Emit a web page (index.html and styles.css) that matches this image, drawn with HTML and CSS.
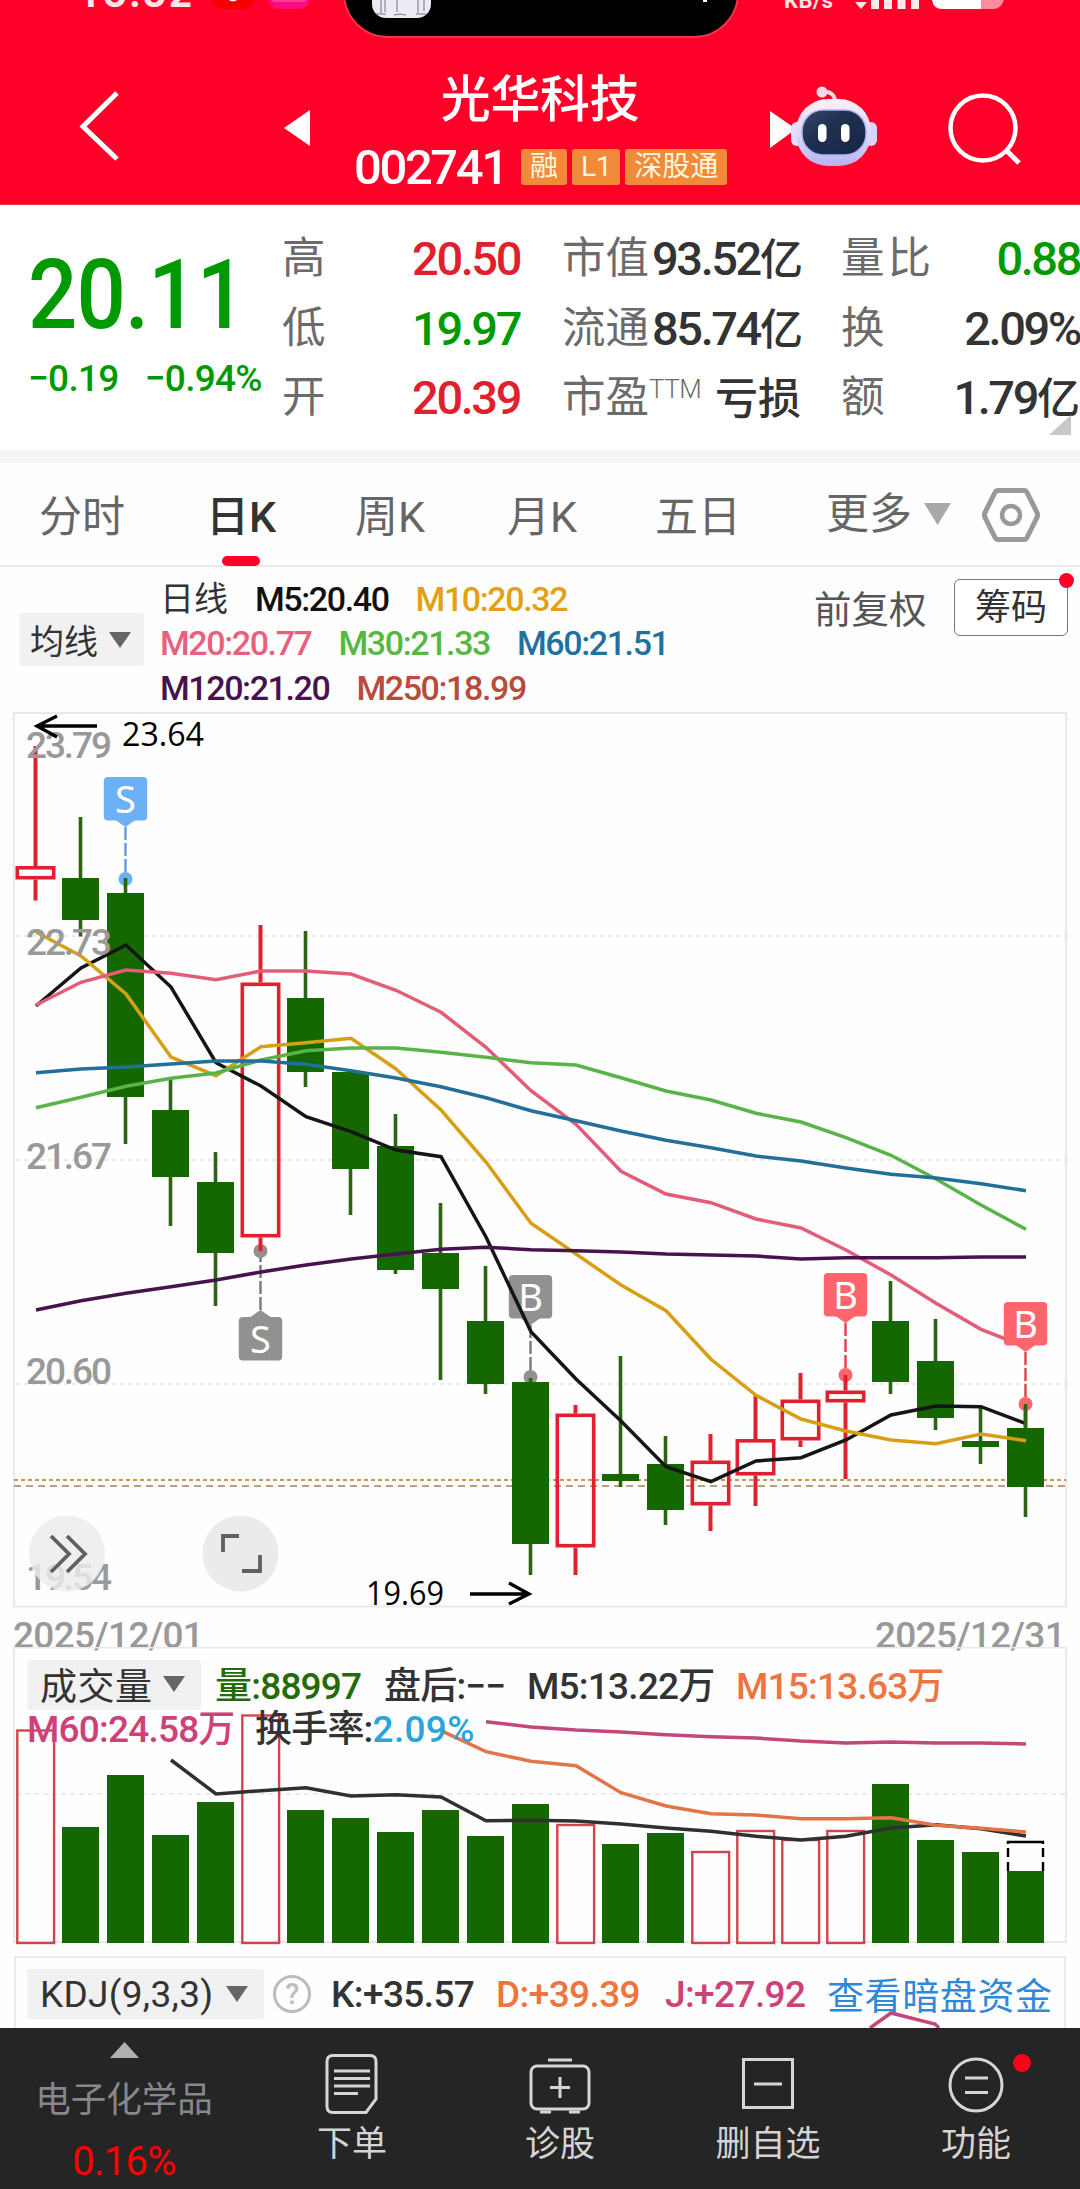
FILE: index.html
```html
<!DOCTYPE html>
<html lang="zh-CN">
<head>
<meta charset="utf-8">
<title>光华科技 002741</title>
<link rel="stylesheet" href="styles.css">
</head>
<body>
<header class="header">
  <svg class="status" viewBox="0 0 1080 50">
    <text class="status-time" x="78" y="6.5" textLength="114">13:32</text>
    <rect x="212" y="-33" width="42" height="42" rx="10" fill="#f40000"/>
    <circle cx="233" cy="-5" r="6.5" fill="#fff"/>
    <rect x="268" y="-33" width="42" height="42" rx="10" fill="#ff0b7d"/>
    <rect x="272" y="-3" width="34" height="5" rx="2" fill="#ff3d9b"/>
    <rect x="344" y="-60" width="394" height="97" rx="44" fill="#000" stroke="#f23549" stroke-width="2"/>
    <rect x="372" y="-41" width="59" height="59" rx="14" fill="#eceaf2"/>
    <path d="M381 0v13M385 0v12M397 0v12M418 0v13M424 0v11M376 14h10M394 15q6-2 12 0M416 14h10" fill="none" stroke="#77767f" stroke-width="1"/>
    <rect x="703" y="0" width="4" height="2" fill="#fff"/>
    <text class="status-net" x="784" y="8" textLength="49">KB/s</text>
    <path d="M855 2h12l-6 7z" fill="#ffe9ec"/>
    <path d="M875 -10V9M888 -10V9M901.500 -10V9M915 -10V9" stroke="#ffe9ec" stroke-width="8"/>
    <rect x="932" y="-30" width="72" height="39" rx="11" fill="#ff8c9b"/>
    <path d="M932 -10h49V9h-38q-11 0-11-11z" fill="#fff"/>
  </svg>
  <nav class="title-bar">
    <svg class="back" viewBox="0 0 50 80"><path d="M42 7 8 40.500 42 73" fill="none" stroke="#fff" stroke-width="5"/></svg>
    <svg class="prev" viewBox="0 0 26 38"><path d="M0 19 26 1v36z" fill="#fff"/></svg>
    <div class="stock">
      <h1 class="stock-name">光华科技</h1>
      <div class="stock-meta">
        <span class="code">002741</span>
        <span class="tag tag-a">融</span><span class="tag tag-b">L1</span><span class="tag tag-c">深股通</span>
      </div>
    </div>
    <svg class="robot" viewBox="0 0 110 90">
      <defs>
        <linearGradient id="shell" x1="0" y1="0" x2="0" y2="1"><stop offset="0" stop-color="#fff0f6"/><stop offset=".6" stop-color="#d8d4f8"/><stop offset="1" stop-color="#b9b2ee"/></linearGradient>
        <linearGradient id="visor" x1="0" y1="0" x2="1" y2="1"><stop offset="0" stop-color="#34466a"/><stop offset=".4" stop-color="#20304f"/><stop offset="1" stop-color="#172447"/></linearGradient>
      </defs>
      <path d="M0 27 26 45 0 64z" fill="#fff"/>
      <path d="M52 8q12-2 14 11" fill="none" stroke="#fbdbe6" stroke-width="4"/>
      <circle cx="52" cy="8" r="5.500" fill="#fbdbe6"/>
      <rect x="21" y="38" width="12" height="24" rx="6" fill="#e7ddf8"/>
      <rect x="95" y="38" width="12" height="24" rx="6" fill="#d9d3fa"/>
      <rect x="26" y="15" width="75" height="67" rx="32" fill="url(#shell)"/>
      <rect x="32" y="26" width="64" height="45" rx="21" fill="url(#visor)" stroke="#aeb5f2" stroke-width="1.500"/>
      <rect x="48" y="40" width="8.500" height="18" rx="4.200" fill="#fff"/>
      <rect x="71" y="40" width="8.500" height="18" rx="4.200" fill="#fff"/>
    </svg>
    <svg class="search" viewBox="0 0 80 80"><circle cx="37" cy="38" r="32.500" fill="none" stroke="#fff" stroke-width="4.500"/><path d="M61 61 73 73" stroke="#fff" stroke-width="5"/></svg>
  </nav>
</header>

<section class="quote">
  <div class="price-block">
    <div class="price">20.11</div>
    <div class="changes"><span>−0.19</span><span>−0.94%</span></div>
  </div>
  <dl class="stats stats-a">
    <dt>高</dt><dd class="up">20.50</dd>
    <dt>低</dt><dd class="down">19.97</dd>
    <dt>开</dt><dd class="up">20.39</dd>
  </dl>
  <dl class="stats stats-b">
    <dt>市值</dt><dd>93.52<i>亿</i></dd>
    <dt>流通</dt><dd>85.74<i>亿</i></dd>
    <dt>市盈<sup>TTM</sup></dt><dd><i>亏损</i></dd>
  </dl>
  <dl class="stats stats-c">
    <dt class="wide">量比</dt><dd class="down">0.88</dd>
    <dt>换</dt><dd>2.09%</dd>
    <dt>额</dt><dd>1.79<i>亿</i></dd>
  </dl>
  <svg class="corner" viewBox="0 0 22 20"><path d="M22 0v20H0z" fill="#c8c8c8"/></svg>
</section>

<nav class="tabs">
  <span class="tab t1">分时</span>
  <span class="tab t2 active">日K</span>
  <span class="tab t3">周K</span>
  <span class="tab t4">月K</span>
  <span class="tab t5">五日</span>
  <span class="tab t6">更多<svg class="more-arrow" viewBox="0 0 27 22"><path d="M0 0h27L13.500 22z" fill="#a8a8a8"/></svg></span>
  <svg class="gear" viewBox="0 0 60 58"><path d="M17 4.500h26q2 0 3 2l10 20q1.200 2.500 0 5l-10 20q-1 2-3 2H17q-2 0-3-2L4 31.500q-1.200-2.500 0-5l10-20q1-2 3-2z" fill="none" stroke="#999" stroke-width="5"/><circle cx="30" cy="29" r="9" fill="none" stroke="#999" stroke-width="4.500"/></svg>
</nav>

<section class="legend">
  <button class="picker picker-ma">均线<svg viewBox="0 0 22 16"><path d="M0 0h22L11 16z" fill="#666"/></svg></button>
  <div class="ma-rows">
    <div class="ma-row"><span class="c-dark cn">日线</span><span class="c-m5">M5:20.40</span><span class="c-m10">M10:20.32</span></div>
    <div class="ma-row"><span class="c-m20">M20:20.77</span><span class="c-m30">M30:21.33</span><span class="c-m60">M60:21.51</span></div>
    <div class="ma-row"><span class="c-m120">M120:21.20</span><span class="c-m250">M250:18.99</span></div>
  </div>
  <div class="legend-tools"><span class="adjust">前复权</span><button class="chips">筹码<i class="dot"></i></button></div>
</section>

<svg class="kline" id="kline" viewBox="0 712 1080 896"></svg>
<div class="dates"><span>2025/12/01</span><span>2025/12/31</span></div>

<section class="volume">
  <svg class="volume-chart" id="volume" viewBox="0 1647 1080 298"></svg>
  <div class="volume-legend">
    <div class="v-row">
      <button class="picker picker-vol">成交量<svg viewBox="0 0 22 16"><path d="M0 0h22L11 16z" fill="#666"/></svg></button>
      <span class="c-green v1">量:88997</span><span class="v2">盘后:−−</span><span class="v3">M5:13.22万</span><span class="c-orange">M15:13.63万</span>
    </div>
    <div class="v-row v-row2"><span class="c-pink v4">M60:24.58万</span><span>换手率:<b>2.09%</b></span></div>
  </div>
</section>

<section class="kdj">
  <button class="picker picker-kdj">KDJ(9,3,3)<svg viewBox="0 0 22 16"><path d="M0 0h22L11 16z" fill="#666"/></svg></button>
  <span class="help">?</span>
  <span class="k1">K:+35.57</span><span class="k2 c-orange">D:+39.39</span><span class="k3 c-pink">J:+27.92</span><a class="k4">查看暗盘资金</a>
  <svg class="kdj-line" viewBox="0 0 72 17"><path d="M1 17 22 2 66 13 70 17" fill="none" stroke="#c2477b" stroke-width="3.500"/></svg>
</section>

<footer class="footer">
  <div class="sector">
    <svg class="up-arrow" viewBox="0 0 29 16"><path d="M14.500 0 29 16H0z" fill="#b0b0b0"/></svg>
    <span class="sector-name">电子化学品</span>
    <span class="sector-pct">0.16%</span>
  </div>
  <div class="action">
    <svg viewBox="0 0 64 60"><path d="M13 1.500h37q6 0 6 6V45L46 58.500H13q-6 0-6-6v-45q0-6 6-6z"/><path d="M14 17h36M14 24.500h36M14 32h36M14 39.500h24"/></svg>
    <span>下单</span>
  </div>
  <div class="action">
    <svg viewBox="0 0 64 60"><rect x="3" y="12" width="58" height="43" rx="6"/><path d="M20 6h24M12 58h11M41 58h11M32 23v21M22 33.500h20"/></svg>
    <span>诊股</span>
  </div>
  <div class="action">
    <svg viewBox="0 0 64 60"><rect x="7.500" y="5.500" width="49" height="48"/><path d="M18 30h28"/></svg>
    <span>删自选</span>
  </div>
  <div class="action">
    <svg viewBox="0 0 64 60"><circle cx="32" cy="31" r="26"/><path d="M21 24h23M21 38.500h23"/></svg>
    <span>功能</span>
    <i class="badge"></i>
  </div>
</footer>
<script src="chart.js"></script>
</body>
</html>
```
FILE: styles.css
```css
* { box-sizing: border-box; }
body {
  margin: 0;
  width: 1080px;
  background: #fefefe;
  color: #333;
  font-family: Roboto, "Noto Sans CJK SC", sans-serif;
}
svg { display: block; flex: none; }
i, a { font-style: normal; }
button { font: inherit; color: inherit; border: 0; margin: 0; padding: 0; }

.header { height: 205px; background: #ff0029; border-bottom: 1px solid #e0304c; }
.status { width: 1080px; height: 50px; }
.status-time { font: 700 40px Roboto; fill: #ffe3e7; }
.status-net { font: 700 22px Roboto; fill: #ffe3e7; }
.title-bar { display: flex; height: 154px; }
.back { width: 50px; height: 80px; margin: 36px 0 0 75px; }
.prev { width: 26px; height: 38px; margin: 59px 0 0 159px; }
.stock { width: 460px; height: 154px; display: flex; flex-direction: column; align-items: center; }
.stock-name { margin: 21px 0 0; font-size: 50px; line-height: 58px; font-weight: 500; color: #fff; letter-spacing: -.4px; }
.stock-meta { display: flex; align-items: center; height: 42px; margin-top: 17px; padding-left: 1px; width: 374px; }
.code { font-size: 49px; line-height: 42px; font-weight: 500; color: #fff; width: 167px; letter-spacing: -2.4px; padding-top: 1px; }
.tag { height: 36px; border-radius: 3px; background: #f18a3b; color: #fff6dc; font-size: 28px; line-height: 36px; text-align: center; margin-right: 5px; }
.tag-a { width: 47px; }
.tag-b { width: 48px; }
.tag-c { width: 102px; margin-right: 0; }
.robot { width: 110px; height: 90px; margin-top: 34px; }
.search { width: 80px; height: 80px; margin: 40px 0 0 66px; }

.quote { position: relative; display: flex; height: 258px; background: #fff; border-bottom: 13px solid #f5f5f5; }
.price-block { width: 282px; padding-left: 28px; color: #009a00; }
.price { font-size: 96px; line-height: 96px; font-weight: 500; margin-top: 42px; letter-spacing: -1px; transform: scaleX(.905); transform-origin: 0 0; white-space: nowrap; }
.changes { display: flex; gap: 26px; margin-top: 12px; font-size: 37px; line-height: 48px; font-weight: 500; letter-spacing: -.7px; white-space: nowrap; }
.stats { display: grid; margin: 19px 0 0; grid-auto-rows: 69.5px; line-height: 69.5px; white-space: nowrap; }
.stats dt { font-size: 43.5px; color: #6b6b6b; }
.stats dt.wide { letter-spacing: 3px; }
.stats dd { margin: 0; font-size: 47px; font-weight: 500; text-align: right; letter-spacing: -2.4px; }
.stats dd i { font-size: 43px; letter-spacing: 0; }
.stats sup { font-size: 26px; line-height: 0; vertical-align: 14px; font-weight: 300; letter-spacing: -.5px; }
.stats-a { width: 238px; grid-template-columns: 70px 168px; }
.stats-b { width: 239px; margin-left: 42px; grid-template-columns: 90px 149px; }
.stats-c { width: 239px; margin-left: 40px; grid-template-columns: 95px 144px; }
.up { color: #e0202c; }
.down { color: #009a00; }
.corner { position: absolute; right: 9px; bottom: 15px; width: 22px; height: 20px; }

.tabs { display: flex; height: 104px; border-bottom: 2px solid #e9e9e9; font-size: 43px; line-height: 109px; color: #666; }
.tab { position: relative; flex: none; }
.t1 { margin-left: 39px; width: 167px; }
.t2 { width: 149px; }
.t3 { width: 152px; }
.t4 { width: 148px; }
.t5 { width: 171px; }
.t6 { display: flex; align-items: center; height: 102px; width: 155px; }
.active { color: #333; font-weight: 500; }
.active::after { content: ""; position: absolute; left: 16px; bottom: -1px; width: 38px; height: 10px; border-radius: 5px; background: #ff0029; }
.more-arrow { width: 27px; height: 22px; margin-left: 12px; }
.gear { width: 60px; height: 58px; margin-top: 23px; }

.legend { display: flex; height: 145px; }
.picker { display: flex; align-items: center; background: #f1f1f1; border-radius: 4px; }
.picker svg { width: 22px; height: 16px; }
.picker-ma { width: 125px; height: 53px; margin: 46px 0 0 19px; padding-left: 11px; font-size: 34px; }
.picker-ma svg { margin-left: 11px; }
.ma-rows { width: 640px; margin: 10px 0 0 16px; font-size: 34px; line-height: 44.3px; letter-spacing: -1.4px; }
.ma-row { display: flex; gap: 27px; height: 44.3px; }
.ma-row span { font-weight: 500; }
.ma-row .cn { letter-spacing: 0; font-weight: 400; }
.legend-tools { display: flex; margin-left: 14px; }
.adjust { width: 140px; font-size: 37.5px; line-height: 86px; color: #555; white-space: nowrap; }
.chips { position: relative; width: 114px; height: 57px; margin-top: 12px; border: 1.5px solid #777; border-radius: 6px; background: #fff; font-size: 36px; line-height: 54px; }
.dot { position: absolute; right: -7px; top: -7px; width: 15px; height: 15px; border-radius: 50%; background: #ff0029; }
.c-dark { color: #333; }
.c-m5 { color: #111; }
.c-m10 { color: #e2a012; }
.c-m20 { color: #e8607d; }
.c-m30 { color: #55b840; }
.c-m60 { color: #1f729d; }
.c-m120 { color: #47124d; }
.c-m250 { color: #b94a3c; }
.c-green { color: #246b08; }
.c-orange { color: #ee7440; }
.c-pink { color: #ce4079; }

.kline { width: 1080px; height: 896px; overflow: visible; font-family: Roboto, sans-serif; }
.axis { font-size: 37px; font-weight: 500; fill: #999; }
.peak { font: 33px "Open Sans", sans-serif; fill: #000; }
.mark { font: 38px "Noto Sans", sans-serif; fill: #fff; text-anchor: middle; }
.dates { display: flex; justify-content: space-between; height: 39px; padding: 0 15px 0 13px; font-size: 37px; line-height: 55px; font-weight: 500; color: #999; letter-spacing: -.7px; }

.volume { display: grid; height: 309px; }
.volume-chart, .volume-legend { grid-area: 1 / 1; }
.volume-chart { width: 1080px; height: 298px; }
.volume-legend { font-size: 37px; font-weight: 500; letter-spacing: -.8px; white-space: nowrap; z-index: 1; }
.v-row { display: flex; align-items: center; margin-top: 13px; height: 50px; }
.v-row > span { padding-bottom: 5px; }
.v-row2 { margin-top: -7px; padding-left: 27px; }
.picker-vol { width: 174px; height: 50px; margin: 0 14px 0 27px; padding: 0 0 2px 13px; font-weight: 400; letter-spacing: .5px; }
.picker-vol svg { margin-left: 10px; }
.v1 { width: 169px; }
.v2 { width: 143px; }
.v3 { width: 209px; }
.v4 { width: 228px; }
.volume-legend b { color: #27a5dc; font-weight: 500; letter-spacing: .3px; }

.kdj { position: relative; display: flex; align-items: center; width: 1052px; height: 72px; margin-left: 14px; padding: 2px 0 0 13px; border: 2px solid #ebebeb; border-bottom: 0; font-size: 37px; font-weight: 500; letter-spacing: -.6px; white-space: nowrap; }
.picker-kdj { width: 237px; height: 50px; margin-left: -2px; padding-left: 13px; font-weight: 400; letter-spacing: .3px; }
.picker-kdj svg { margin-left: 13px; }
.help { width: 38px; height: 38px; margin: 0 20px 0 9px; border: 3px solid #bdbdbd; border-radius: 50%; color: #bdbdbd; font-size: 29px; line-height: 33px; text-align: center; }
.k1 { width: 165px; }
.k2 { width: 169px; }
.k3 { width: 162px; }
.k4 { color: #2f89d8; font-weight: 400; letter-spacing: .6px; }
.kdj-line { position: absolute; left: 853px; bottom: 0; width: 72px; height: 17px; }

.footer { display: flex; height: 161px; background: #252525; color: #d4d4d4; font-size: 35px; overflow: hidden; }
.sector { width: 248px; display: flex; flex-direction: column; align-items: center; }
.up-arrow { width: 29px; height: 16px; margin-top: 14px; }
.sector-name { margin-top: 21px; line-height: 42px; color: #87878c; font-size: 35.500px; }
.sector-pct { margin-top: 19px; line-height: 44px; font-size: 40px; color: #f00; letter-spacing: -.8px; }
.action { position: relative; width: 208px; display: flex; flex-direction: column; align-items: center; }
.action svg { width: 64px; height: 60px; margin-top: 26px; fill: none; stroke: #d6d6d6; stroke-width: 3; }
.action span { margin-top: 10px; line-height: 42px; }
.badge { position: absolute; right: 49px; top: 26px; width: 18px; height: 18px; border-radius: 50%; background: #ff0019; }
```
FILE: chart.js
```js
const X0 = 35.5, STEP = 45, GREEN = '#156800', RED = '#e0202f';
const cx = i => X0 + STEP * i;

// Each candle: direction, high, body top, body bottom, low (chart y units).
const candles = [
  ['r', 746, 866, 879.5, 900.5], ['g', 817, 878, 920, 936.5], ['g', 878, 893, 1097, 1144],
  ['g', 1080, 1110, 1177, 1226], ['g', 1152, 1182, 1253, 1306], ['r', 925, 982.5, 1237.5, 1251],
  ['g', 931, 998, 1072, 1087], ['g', 1072, 1072, 1169, 1215], ['g', 1114, 1146, 1270, 1274],
  ['g', 1203, 1253, 1289, 1380], ['g', 1266, 1321, 1384, 1394], ['g', 1378, 1382, 1544, 1575],
  ['r', 1405, 1413.5, 1547.5, 1575], ['g', 1356, 1474, 1481, 1487], ['g', 1436, 1464, 1510, 1525],
  ['r', 1434, 1460.5, 1505.5, 1531], ['r', 1396, 1439, 1475.5, 1506], ['r', 1373, 1399.5, 1440.5, 1447],
  ['r', 1375, 1390.5, 1402.5, 1479], ['g', 1281, 1321, 1382, 1394], ['g', 1319, 1361, 1418, 1430],
  ['g', 1408, 1441, 1447, 1464], ['g', 1405, 1428, 1487, 1517]
];
const averages = [
  ['#151515', 0, [1006, 968, 945, 987, 1062.7, 1086, 1116.7, 1131.7, 1150, 1156.7, 1237, 1331.7, 1379, 1421, 1466.7, 1481.7, 1461, 1457.7, 1440, 1415, 1406, 1406.7, 1423.7]],
  ['#d89e16', 0, [932, 956, 994, 1057, 1075.7, 1046.7, 1042.7, 1038.3, 1069, 1110, 1162, 1223.3, 1254, 1285, 1310.7, 1359.3, 1395.3, 1419, 1431, 1440, 1443.7, 1434, 1440.7]],
  ['#e35c78', 0, [1005, 982.3, 970, 973.3, 979.7, 971, 971, 974, 990.3, 1012.3, 1047.3, 1090.7, 1124.3, 1171.3, 1194, 1202.7, 1219, 1228, 1250, 1275, 1303.3, 1329.3, 1347]],
  ['#58b446', 0, [1107.7, 1097.3, 1086.3, 1078.3, 1073, 1060, 1050.7, 1048, 1048, 1052.3, 1057.3, 1062.7, 1065, 1077.7, 1091, 1100, 1113.3, 1122, 1137.7, 1155.3, 1179, 1205, 1229.3]],
  ['#226f99', 0, [1072.7, 1069, 1067, 1064, 1061, 1061, 1064.3, 1070.7, 1078, 1086.7, 1097.7, 1110.7, 1120.7, 1131, 1140.3, 1147.7, 1156, 1161, 1168, 1174.3, 1178, 1183.7, 1190.7]],
  ['#47124d', 0, [1310, 1300.7, 1293.3, 1286.7, 1280, 1272, 1265, 1259, 1254, 1249.3, 1247.3, 1249.7, 1250.7, 1252, 1254, 1255, 1256, 1259, 1257.7, 1257.7, 1257.7, 1257, 1257]]
];
const volumes = [
  ['r', 1729.5], ['g', 1827], ['g', 1775], ['g', 1835], ['g', 1802], ['r', 1714.5], ['g', 1810], ['g', 1818],
  ['g', 1832], ['g', 1810], ['g', 1836], ['g', 1804], ['r', 1824], ['g', 1844], ['g', 1833], ['r', 1851],
  ['r', 1830], ['r', 1839], ['r', 1830], ['g', 1784], ['g', 1840], ['g', 1852], ['g', 1871]
];
const volumeAverages = [
  ['#303030', 3, [1760, 1794, 1790.7, 1787.7, 1796, 1794.7, 1797, 1820.7, 1820.3, 1821, 1824, 1828, 1831.3, 1836.3, 1840, 1836.3, 1828, 1824.7, 1828.7, 1836]],
  ['#e37445', 9, [1730.7, 1751.7, 1761.3, 1765.7, 1792.7, 1806, 1813.7, 1815, 1818.7, 1818.7, 1817.7, 1825.3, 1828.3, 1832]],
  ['#c2477b', 10, [1721.7, 1727, 1730, 1732, 1734.7, 1736.7, 1738, 1741, 1743, 1742, 1743, 1743, 1744]]
];

const line = ([color, start, ys]) =>
  `<polyline points="${ys.map((y, i) => `${cx(start + i) + 0.5},${y}`).join(' ')}" fill="none" stroke="${color}" stroke-width="3.5"/>`;

const candle = ([dir, hi, top, bottom, lo], i) => {
  const x = cx(i);
  if (dir === 'g') {
    return `<path d="M${x} ${hi}V${lo}" stroke="#2c6413" stroke-width="3.6"/>
      <rect x="${x - 18.5}" y="${top}" width="37" height="${bottom - top}" fill="${GREEN}"/>`;
  }
  return `<path d="M${x} ${hi}V${top}M${x} ${bottom}V${lo}" stroke="${RED}" stroke-width="4"/>
    <rect x="${x - 18.2}" y="${top + 1.8}" width="36.4" height="${bottom - top - 3.6}" fill="none" stroke="${RED}" stroke-width="3.6"/>`;
};

// A flag sits at boxY and is tied by a dashed leader to a dot at dotY.
const flag = (i, letter, boxY, dotY, color, leader) => {
  const x = cx(i), below = dotY < boxY;
  const edge = below ? boxY : boxY + 43, tip = below ? edge - 7 : edge + 7;
  return `<path d="M${x} ${tip}V${dotY}" stroke="${leader}" stroke-width="2.4" stroke-dasharray="13 3"/>
    <circle cx="${x}" cy="${dotY}" r="7" fill="${color}"/>
    <path d="M${x - 10} ${edge}L${x} ${tip}L${x + 10} ${edge}z" fill="${color}"/>
    <rect x="${x - 21.7}" y="${boxY}" width="43.400" height="43.400" rx="4" fill="${color}"/>
    <text class="mark" x="${x}" y="${boxY + 36}">${letter}</text>`;
};

const grid = (y, dash) => `<path d="M16 ${y}H1065" stroke="#e4e4e4" stroke-width="1.600" stroke-dasharray="${dash}"/>`;
const axis = (y, label) => `<text class="axis" x="26" y="${y}" textLength="86">${label}</text>`;

document.getElementById('kline').innerHTML = `
  <rect x="14" y="713" width="1052" height="893.500" fill="#fefefe" stroke="#e9e9e9" stroke-width="2"/>
  ${grid(936, '4 4')}${grid(1160, '4 4')}${grid(1384, '4 4')}
  <path d="M14 1480H1066" stroke="#c9935a" stroke-width="2" stroke-dasharray="4 3"/>
  <path d="M14 1486H1066" stroke="#b7a083" stroke-width="2" stroke-dasharray="7 5"/>
  ${flag(2, 'S', 777, 879, '#6cb1f5', '#5d9cd8')}
  ${flag(5, 'S', 1317, 1251, '#919191', '#77777c')}
  ${flag(11, 'B', 1275, 1377, '#919191', '#77777c')}
  ${flag(18, 'B', 1273, 1375, '#ff656d', '#e04048')}
  ${candles.map(candle).join('')}
  ${averages.map(line).join('')}
  ${flag(22, 'B', 1302, 1404, '#ff656d', '#e04048')}
  <path d="M${cx(22)} 1404V1428" stroke="#2c6413" stroke-width="3.600"/>
  ${axis(758, '23.79')}${axis(955, '22.73')}${axis(1169, '21.67')}${axis(1384, '20.60')}${axis(1590, '19.54')}
  <path d="M97 726H37M57 716L37 726L57 737" fill="none" stroke="#000" stroke-width="3.300"/>
  <text class="peak" x="122" y="746" textLength="82" lengthAdjust="spacingAndGlyphs">23.64</text>
  <path d="M470 1594H529M509 1583L529 1594L509 1604" fill="none" stroke="#000" stroke-width="3.300"/>
  <text class="peak" x="366" y="1605" textLength="78" lengthAdjust="spacingAndGlyphs">19.69</text>
  <circle cx="67" cy="1553.500" r="38" fill="#ebebeb" fill-opacity=".82"/>
  <path d="M51 1536L69 1554L51 1572M67 1536L85 1554L67 1572" fill="none" stroke="#606060" stroke-width="3.800"/>
  <circle cx="240.500" cy="1553.500" r="38" fill="#ebebeb"/>
  <path d="M223 1552V1536H239M260 1555V1571H242" fill="none" stroke="#606060" stroke-width="3.800"/>`;

document.getElementById('volume').innerHTML = `
  <rect x="14" y="1647.500" width="1052" height="294.500" fill="none" stroke="#e9e9e9" stroke-width="2"/>
  ${grid(1794, '5 4')}
  ${volumes.map(([dir, y], i) => dir === 'g'
    ? `<rect x="${cx(i) - 18.5}" y="${y}" width="37" height="${1943 - y}" fill="${GREEN}"/>`
    : `<rect x="${cx(i) - 18.2}" y="${y + 1}" width="36.800" height="${1942 - y}" fill="none" stroke="#cf454d" stroke-width="2.400"/>`).join('')}
  <path d="M1008 1871V1862M1008 1857V1848M1008 1844V1842H1043V1844M1043 1848V1857M1043 1862V1871" fill="none" stroke="#000" stroke-width="2.400"/>
  ${volumeAverages.map(line).join('')}`;
```
